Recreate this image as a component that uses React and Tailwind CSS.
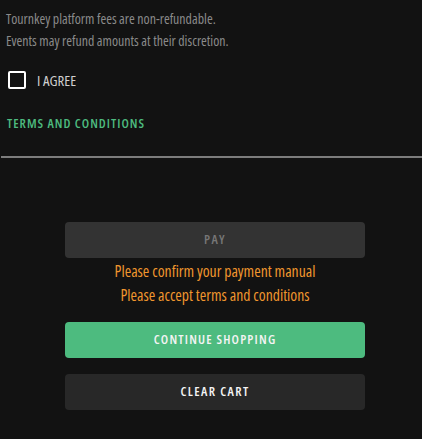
export default function App() {
  const font = { fontFamily: '"Open Sans", "Roboto Condensed", sans-serif' };
  return (
    <div className="w-[422px] h-[439px] bg-[#121212] overflow-hidden [font-stretch:75%]" style={font}>
      <div className="px-[6px] pt-[8px] text-[13.9px] leading-[22px] text-[#8a8a8a]">
        <p>Tournkey platform fees are non-refundable.</p>
        <p>Events may refund amounts at their discretion.</p>
      </div>
      <label className="flex items-center gap-[11px] pl-[8px] mt-[19px] h-[18px]">
        <span className="w-[18px] h-[18px] border-2 border-white rounded-[2px]" />
        <span className="text-[14.8px] text-[#cfcfcf]">I AGREE</span>
      </label>
      <div className="pl-[7px] mt-[24px] h-[20px] leading-[20px] text-[13px] font-semibold tracking-[1px] text-[#4dbb7f]">
        TERMS AND CONDITIONS
      </div>
      <div className="ml-[1px] mt-[23px] h-[2px] bg-[#7c7c7c]" />
      <div className="flex flex-col items-center mt-[64px] pl-[8px]">
        <button className="w-[300px] h-[36px] rounded-[4px] bg-[#333333] text-[#777777] text-[13px] font-semibold tracking-[1.3px]">
          PAY
        </button>
        <p className="mt-[1px] text-[15.7px] leading-[24px] text-[#f0962e]">Please confirm your payment manual</p>
        <p className="text-[15.7px] leading-[24px] text-[#f0962e]">Please accept terms and conditions</p>
        <button className="mt-[15px] w-[300px] h-[36px] rounded-[4px] bg-[#4dbb7f] text-[#f4f4f4] text-[13px] font-semibold tracking-[1.2px]">
          CONTINUE SHOPPING
        </button>
        <button className="mt-[16px] w-[300px] h-[36px] rounded-[4px] bg-[#282828] text-[#f4f4f4] text-[13px] font-semibold tracking-[1.4px]">
          CLEAR CART
        </button>
      </div>
    </div>
  );
}
